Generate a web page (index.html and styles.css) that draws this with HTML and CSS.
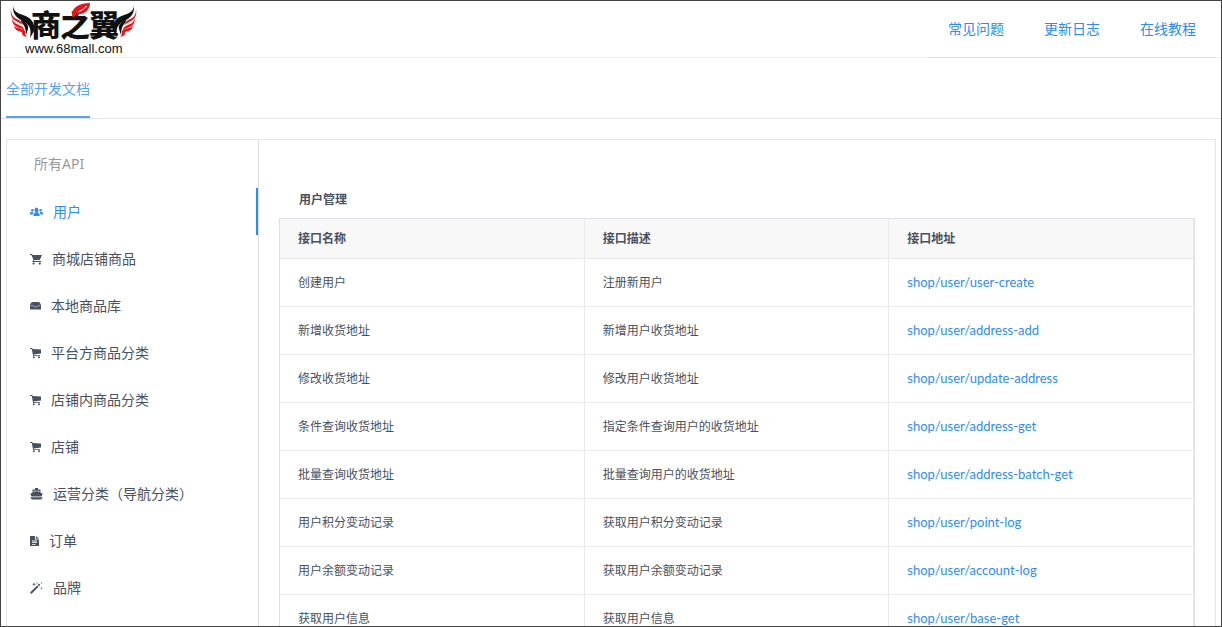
FILE: index.html
```html
<!DOCTYPE html>
<html lang="zh-CN">
<head>
<meta charset="utf-8">
<meta name="viewport" content="width=device-width, initial-scale=1">
<title>开发文档</title>
<link rel="stylesheet" href="styles.css">
</head>
<body>
<div class="app">
  <header class="header">
    <a class="logo" href="#" aria-label="商之翼">
      <svg class="logo-img" viewBox="0 0 130 56" role="img" aria-hidden="true">
        <defs>
          <g id="wing">
            <path class="ink" d="M3 4C3 10 7 12 13 14C20 16 26 22 24 30L20 37C21 30 21 26 16 22C9 18 2 15 3 4Z"/>
            <path class="ink" d="M11 19C16 21 19 24 18 28L16 34C16 29 15 26 13 23C11 21 11 20 11 19Z"/>
            <path class="feather" d="M1 8C1 15 4 17 9 19C11 20 12 22 13 24C10 22 8 21 6 20C2 18 0 14 1 8ZM2 17C3 22 7 23 11 25C13 26 14 27 14 29C11 27 9 27 7 26C3 24 2 21 2 17ZM4 25C7 28 13 27 15 30C16 32 14 33 17 36C13 35 12 34 12 31C9 30 5 30 4 25Z"/>
          </g>
        </defs>
        <use href="#wing"/>
        <use href="#wing" transform="translate(127 0) scale(-1 1)"/>
        <text class="logo-char" x="21" y="35">商</text>
        <text class="logo-char" x="50" y="35">之</text>
        <text class="logo-char" x="79" y="35">翼</text>
        <path class="leaf" d="M62 14C62 6 70 2 80 2C80 9 74 14 67 13L63 17Z"/>
        <path class="vein" d="M68 11Q73 9 77 5"/>
        <text class="logo-url" x="15" y="52">www.68mall.com</text>
      </svg>
    </a>
    <nav class="top-nav">
      <a href="#">常见问题</a>
      <a href="#">更新日志</a>
      <a href="#">在线教程</a>
    </nav>
  </header>

  <nav class="tabs"><a class="tab" href="#" aria-current="page">全部开发文档</a></nav>

  <div class="panel">
    <aside class="sidebar">
      <h2 class="sidebar-title">所有API</h2>
      <a class="item active" href="#">
        <svg class="icon wide" viewBox="0 0 13 12"><circle cx="2.4" cy="4.2" r="1.3"/><circle cx="10.6" cy="4.2" r="1.3"/><path d="M0 8.6V7.4Q0 6 1.6 6H3.2L2.6 8.6ZM13 8.6V7.4Q13 6 11.4 6H9.8L10.4 8.6Z"/><ellipse cx="6.5" cy="4" rx="2" ry="2.6"/><path d="M3.4 10V8.4Q3.4 7.2 5.4 6.8V5.5H7.6V6.8Q9.6 7.2 9.6 8.4V10Z"/></svg>
        用户</a>
      <a class="item" href="#">
        <svg class="icon mid" viewBox="0 0 12 12"><path d="M0 1H2L2.6 2H12L9.8 7H4.4L3.8 8H11V9H2.3L3.4 6.8L1.4 2H0Z"/><circle cx="3.6" cy="10.6" r="1.1"/><circle cx="9.8" cy="10.6" r="1.1"/></svg>
        商城店铺商品</a>
      <a class="item" href="#">
        <svg class="icon narrow" viewBox="0 0 11 12"><path d="M0 6Q.6 2 2.6 2H8.4Q10.4 2 11 6V9Q11 9.6 10.4 9.6H.6Q0 9.6 0 9Z"/><path class="slot" d="M1 5.8H3.6L4.3 6.9H6.7L7.4 5.8H10"/></svg>
        本地商品库</a>
      <a class="item" href="#">
        <svg class="icon narrow" viewBox="0 0 11 12"><path d="M0 1H2.2L2.6 2L11 2.4V6.5L3.6 7.4L3.9 8.3H10V9.1H3.1L1.8 1.9H0Z"/><circle cx="3.8" cy="10.3" r="1"/><circle cx="9" cy="10.3" r="1"/></svg>
        平台方商品分类</a>
      <a class="item" href="#">
        <svg class="icon narrow" viewBox="0 0 11 12"><path d="M0 1H2.2L2.6 2L11 2.4V6.5L3.6 7.4L3.9 8.3H10V9.1H3.1L1.8 1.9H0Z"/><circle cx="3.8" cy="10.3" r="1"/><circle cx="9" cy="10.3" r="1"/></svg>
        店铺内商品分类</a>
      <a class="item" href="#">
        <svg class="icon narrow" viewBox="0 0 11 12"><path d="M0 1H2.2L2.6 2L11 2.4V6.5L3.6 7.4L3.9 8.3H10V9.1H3.1L1.8 1.9H0Z"/><circle cx="3.8" cy="10.3" r="1"/><circle cx="9" cy="10.3" r="1"/></svg>
        店铺</a>
      <a class="item" href="#">
        <svg class="icon wide" viewBox="0 0 13 12"><path d="M5 0H8V1.5H10.5V4.8L12.8 5.8L11.4 8.6H1.6L.2 5.8L2.5 4.8V1.5H5ZM3.7 2.7V4L6.5 3L9.3 4V2.7Z"/><path d="M.6 9.2H12.4V10.2L10.8 11.4H2.2L.6 10.2Z"/></svg>
        运营分类（导航分类）</a>
      <a class="item" href="#">
        <svg class="icon slim" viewBox="0 0 9 12"><path fill-rule="evenodd" d="M0 1H5V4.5H9V11H0ZM6 1L9 3.7H6ZM2 5.5V6.4H7V5.5ZM2 7.2V8.1H7V7.2ZM2 8.9V9.8H5.5V8.9Z"/></svg>
        订单</a>
      <a class="item" href="#">
        <svg class="icon wide" viewBox="0 0 13 12"><path d="M0 10.6L7.2 3.4L8.6 4.8L1.4 12ZM7.8 2.8L9 1.6L10.4 3L9.2 4.2ZM4 .5L4.6 1.7L5.8 2.2L4.6 2.7L4 4L3.4 2.7L2.2 2.2L3.4 1.7ZM11.7 0L12 .7L12.8 1L12 1.3L11.7 2.1L11.4 1.3L10.6 1L11.4 .7ZM11.7 5L12.1 5.9L13 6.2L12.1 6.6L11.7 7.5L11.3 6.6L10.4 6.2L11.3 5.9ZM7 0L7.3 .7L8 1L7.3 1.3L7 2L6.7 1.3L6 1L6.7 .7Z"/></svg>
        品牌</a>
    </aside>
    <main class="content">
      <h1 class="section-title">用户管理</h1>
      <table class="api-table">
        <thead><tr><th scope="col">接口名称</th><th scope="col">接口描述</th><th scope="col">接口地址</th></tr></thead>
        <tbody>
          <tr><td>创建用户</td><td>注册新用户</td><td><a href="#">shop/user/user-create</a></td></tr>
          <tr><td>新增收货地址</td><td>新增用户收货地址</td><td><a href="#">shop/user/address-add</a></td></tr>
          <tr><td>修改收货地址</td><td>修改用户收货地址</td><td><a href="#">shop/user/update-address</a></td></tr>
          <tr><td>条件查询收货地址</td><td>指定条件查询用户的收货地址</td><td><a href="#">shop/user/address-get</a></td></tr>
          <tr><td>批量查询收货地址</td><td>批量查询用户的收货地址</td><td><a href="#">shop/user/address-batch-get</a></td></tr>
          <tr><td>用户积分变动记录</td><td>获取用户积分变动记录</td><td><a href="#">shop/user/point-log</a></td></tr>
          <tr><td>用户余额变动记录</td><td>获取用户余额变动记录</td><td><a href="#">shop/user/account-log</a></td></tr>
          <tr><td>获取用户信息</td><td>获取用户信息</td><td><a href="#">shop/user/base-get</a></td></tr>
        </tbody>
      </table>
    </main>
  </div>
</div>
</body>
</html>
```
FILE: styles.css
```css
* { box-sizing: border-box; }
body {
  margin: 0;
  font: 14px/20px "Noto Sans", "Noto Sans CJK SC", sans-serif;
  color: #495060;
  background: #fff;
}
a { color: #2d8cf0; text-decoration: none; }

.app {
  height: 100vh;
  overflow: hidden;
  border: 1px solid #444;
}

.header {
  display: flex;
  justify-content: space-between;
  height: 57px;
  padding: 0 5px 0 9px;
  border-bottom: 1px solid #eee;
}
.logo-img { display: block; width: 130px; height: 56px; }
.ink { fill: #111; }
.feather { fill: #e8131b; }
.logo-char { font: 900 30px "Noto Sans CJK SC", sans-serif; fill: #111; }
.leaf { fill: #e8131b; }
.vein { fill: none; stroke: #fff; stroke-width: 1; }
.logo-url { font: 13px "Liberation Sans", Arial, sans-serif; fill: #111; }

.top-nav {
  display: flex;
  gap: 40px;
  height: 57px;
  padding: 0 20px;
  border-bottom: 1px solid #dddee1;
  line-height: 56px;
}

.tabs {
  display: flex;
  height: 61px;
  padding: 0 5px;
  border-bottom: 1px solid #e3e5e8;
}
.tab {
  height: 60px;
  border-bottom: 2px solid #57a3f3;
  color: #57a3f3;
  line-height: 62px;
}

.panel {
  display: flex;
  margin: 20px 5px;
  border: 1px solid #e3e5e8;
}
.sidebar {
  flex: 0 0 252px;
  border-right: 1px solid #dddee1;
}
.sidebar-title {
  margin: 0;
  padding: 0 27px;
  color: #999;
  font-size: 14px;
  font-weight: 400;
  line-height: 48px;
}
.item {
  display: flex;
  align-items: center;
  gap: 10px;
  height: 47px;
  padding-left: 23px;
  color: #495060;
}
.item.active { border-right: 2px solid #2d8cf0; color: #2d8cf0; }
.icon { flex: none; height: 12px; fill: currentColor; }
.wide { width: 13px; }
.mid { width: 12px; }
.narrow { width: 11px; }
.slim { width: 9px; }
.slot { fill: none; stroke: #a4a8b0; stroke-width: 1; }

.content { flex: 1; padding: 50px 20px 20px; }
.section-title {
  margin: 0;
  padding: 0 20px;
  font-size: 12px;
  line-height: 20px;
}
.api-table {
  width: 100%;
  margin-top: 8px;
  border: 1px solid #dddee1;
  border-collapse: separate;
  border-spacing: 0;
  table-layout: fixed;
  font-size: 12px;
}
.api-table th,
.api-table td {
  padding: 0 18px;
  border-right: 1px solid #e9eaec;
  border-bottom: 1px solid #e9eaec;
  text-align: left;
}
.api-table th { height: 40px; background: #f8f8f9; }
.api-table td { height: 48px; }
.api-table a { font: 13px/20px Lato, "Noto Sans CJK SC", sans-serif; }
```
